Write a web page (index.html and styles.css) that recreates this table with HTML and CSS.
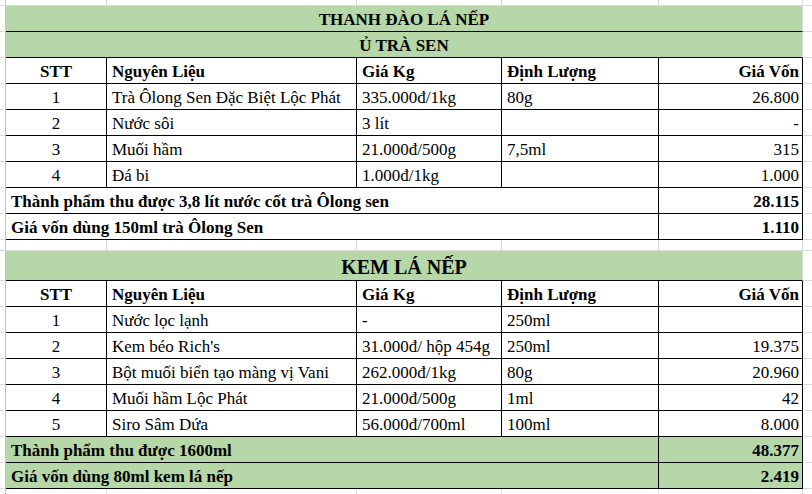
FILE: index.html
```html
<!DOCTYPE html>
<html lang="vi">
<head>
<meta charset="utf-8">
<title>Thanh Đào Lá Nếp</title>
<link rel="stylesheet" href="styles.css">
</head>
<body>
<table class="sheet">
  <colgroup>
    <col class="w0"><col class="w1"><col class="w2"><col class="w3"><col class="w4"><col class="w5"><col class="w6">
  </colgroup>
  <tbody>
    <tr class="edge"><td class="m"></td><td></td><td></td><td></td><td></td><td></td><td class="m"></td></tr>

    <tr><td class="m"></td><td colspan="5" class="band bb title">THANH ĐÀO LÁ NẾP</td><td class="m"></td></tr>
    <tr><td class="m"></td><td colspan="5" class="band bb title">Ủ TRÀ SEN</td><td class="m"></td></tr>
    <tr class="head"><td class="m"></td><td class="k c">STT</td><td class="k">Nguyên Liệu</td><td class="k">Giá Kg</td><td class="k">Định Lượng</td><td class="k r kr">Giá Vốn</td><td class="m"></td></tr>
    <tr><td class="m"></td><td class="k c">1</td><td class="k">Trà Ôlong Sen Đặc Biệt Lộc Phát</td><td class="k">335.000đ/1kg</td><td class="k">80g</td><td class="k r kr">26.800</td><td class="m"></td></tr>
    <tr><td class="m"></td><td class="k c">2</td><td class="k">Nước sôi</td><td class="k">3 lít</td><td class="k"></td><td class="k r kr">-</td><td class="m"></td></tr>
    <tr><td class="m"></td><td class="k c">3</td><td class="k">Muối hầm</td><td class="k">21.000đ/500g</td><td class="k">7,5ml</td><td class="k r kr">315</td><td class="m"></td></tr>
    <tr><td class="m"></td><td class="k c">4</td><td class="k">Đá bi</td><td class="k">1.000đ/1kg</td><td class="k"></td><td class="k r kr">1.000</td><td class="m"></td></tr>
    <tr class="sum"><td class="m"></td><td colspan="4" class="k">Thành phẩm thu được 3,8 lít nước cốt trà Ôlong sen</td><td class="k r kr">28.115</td><td class="m"></td></tr>
    <tr class="sum"><td class="m"></td><td colspan="4" class="k">Giá vốn dùng 150ml trà Ôlong Sen</td><td class="k r kr">1.110</td><td class="m"></td></tr>

    <tr class="gap"><td class="m"></td><td></td><td></td><td></td><td></td><td></td><td class="m"></td></tr>

    <tr class="big"><td class="m"></td><td colspan="5" class="band bb big-title">KEM LÁ NẾP</td><td class="m"></td></tr>
    <tr class="head"><td class="m"></td><td class="k c">STT</td><td class="k">Nguyên Liệu</td><td class="k">Giá Kg</td><td class="k">Định Lượng</td><td class="k r kr">Giá Vốn</td><td class="m"></td></tr>
    <tr><td class="m"></td><td class="k c">1</td><td class="k">Nước lọc lạnh</td><td class="k">-</td><td class="k">250ml</td><td class="k r kr"></td><td class="m"></td></tr>
    <tr><td class="m"></td><td class="k c">2</td><td class="k">Kem béo Rich's</td><td class="k">31.000đ/ hộp 454g</td><td class="k">250ml</td><td class="k r kr">19.375</td><td class="m"></td></tr>
    <tr><td class="m"></td><td class="k c">3</td><td class="k">Bột muối biển tạo màng vị Vani</td><td class="k">262.000đ/1kg</td><td class="k">80g</td><td class="k r kr">20.960</td><td class="m"></td></tr>
    <tr><td class="m"></td><td class="k c">4</td><td class="k">Muối hầm Lộc Phát</td><td class="k">21.000đ/500g</td><td class="k">1ml</td><td class="k r kr">42</td><td class="m"></td></tr>
    <tr><td class="m"></td><td class="k c">5</td><td class="k">Siro Sâm Dứa</td><td class="k">56.000đ/700ml</td><td class="k">100ml</td><td class="k r kr">8.000</td><td class="m"></td></tr>
    <tr class="sum green"><td class="m"></td><td colspan="4" class="k">Thành phẩm thu được 1600ml</td><td class="k r kr">48.377</td><td class="m"></td></tr>
    <tr class="sum green"><td class="m"></td><td colspan="4" class="k">Giá vốn dùng 80ml kem lá nếp</td><td class="k r kr">2.419</td><td class="m"></td></tr>

    <tr class="edge"><td class="m"></td><td></td><td></td><td></td><td></td><td></td><td class="m"></td></tr>
  </tbody>
</table>
</body>
</html>
```

FILE: styles.css
```css
html, body {
  margin: 0;
  padding: 0;
  background: #ffffff;
}

body {
  width: 812px;
  height: 494px;
  overflow: hidden;
  font-family: "Liberation Serif", "Times New Roman", serif;
  font-size: 17px;
  color: #000000;
}

.sheet {
  border-collapse: separate;
  border-spacing: 0;
  table-layout: fixed;
  width: 812px;
}

.w0 { width: 6px; }
.w1 { width: 101px; }
.w2 { width: 250px; }
.w3 { width: 145px; }
.w4 { width: 157px; }
.w5 { width: 144px; }
.w6 { width: 9px; }

.sheet td {
  box-sizing: border-box;
  height: 26px;
  padding: 2px 5px 0 5px;
  border-right: 1px solid #dadada;
  border-bottom: 1px solid #dadada;
  white-space: nowrap;
  overflow: hidden;
  vertical-align: middle;
  line-height: 22px;
}

.sheet td.m {
  padding: 0;
}

.sheet tr td:first-child {
  border-right-color: #c4c4c4;
}

.sheet tr td:last-child {
  border-right: none;
}

.edge td {
  height: 6px;
  padding: 0;
  line-height: 0;
}

.gap td {
  height: 11px;
  padding: 0;
  line-height: 0;
}

.sheet td.k {
  border-right-color: #000000;
  border-bottom-color: #000000;
}

.sheet td.bb {
  border-bottom-color: #000000;
}

.band {
  background: #b6d7a8;
  text-align: center;
  font-weight: bold;
}

.title {
  font-size: 17px;
}

.big td {
  height: 30px;
}

.big-title {
  font-size: 20px;
}

.head td,
.sum td {
  font-weight: bold;
}

.green td.k {
  background: #b6d7a8;
}

.c { text-align: center; }
.r { text-align: right; }
.sheet td.kr { padding-right: 3px; }
```
